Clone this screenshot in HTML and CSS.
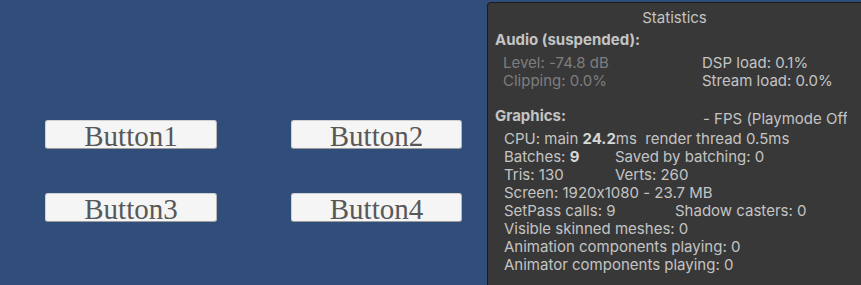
FILE: index.html
```html
<!DOCTYPE html>
<html>
<head>
<meta charset="utf-8">
<link rel="stylesheet" href="styles.css">
</head>
<body>
<div class="scene">
  <div class="canvas">
    <div class="btn">Button1</div>
    <div class="btn">Button2</div>
    <div class="btn">Button3</div>
    <div class="btn">Button4</div>
  </div>
  <div class="stats">
    <div class="title">Statistics</div>
    <div class="clip">
      <div class="head">Audio (suspended):</div>
      <div class="audio">
        <div class="col dim">Level: -74.8 dB<br>Clipping: 0.0%</div>
        <div class="col">DSP load: 0.1%<br>Stream load: 0.0%</div>
      </div>
      <div class="gfx-head">
        <span class="head">Graphics:</span>
        <span class="fps">- FPS (Playmode Off)</span>
      </div>
      <div class="lines">
        <div class="line pre">CPU: main <b>24.2</b>ms  render thread 0.5ms</div>
        <div class="line"><span class="c1">Batches: <b>9</b></span>Saved by batching: 0</div>
        <div class="line"><span class="c1">Tris: 130</span>Verts: 260</div>
        <div class="line">Screen: 1920x1080 - 23.7 MB</div>
        <div class="line"><span class="c2">SetPass calls: 9</span>Shadow casters: 0</div>
        <div class="line">Visible skinned meshes: 0</div>
        <div class="line">Animation components playing: 0</div>
        <div class="line">Animator components playing: 0</div>
      </div>
    </div>
  </div>
</div>
</body>
</html>
```
FILE: styles.css
```css
html, body {
  margin: 0;
  padding: 0;
  width: 861px;
  height: 285px;
  overflow: hidden;
  background: #314d79;
}
.scene {
  display: flex;
  height: 285px;
  overflow: hidden;
}
.canvas {
  width: 487px;
  flex: none;
  display: grid;
  grid-template-columns: 172px 171px;
  grid-auto-rows: 29px;
  column-gap: 74px;
  row-gap: 44px;
  padding: 120px 0 0 45px;
  box-sizing: border-box;
  align-content: start;
}
.btn {
  background: #f5f5f5;
  border: 1px solid #d0d0d0;
  border-bottom-color: #9c9c9c;
  border-right-color: #b8b8b8;
  border-radius: 3px;
  box-sizing: border-box;
  font-family: "Liberation Serif", serif;
  font-size: 29px;
  line-height: 30px;
  color: #585858;
  text-align: center;
}
.stats {
  flex: none;
  width: 374px;
  margin-top: 2px;
  height: 290px;
  background: #383838;
  border: 1px solid #1c1c1c;
  border-right: none;
  border-bottom: none;
  border-radius: 4px 0 0 0;
  box-sizing: border-box;
  font-family: Inter, "Noto Sans", sans-serif;
  font-size: 15px;
  font-feature-settings: "calt" 0;
  color: #c4c4c4;
}
.title {
  text-align: center;
  line-height: 18px;
  padding-top: 6px;
}
.clip {
  width: 352px;
  overflow: hidden;
  white-space: nowrap;
  padding-left: 7px;
}
.head {
  display: block;
  font-weight: 700;
  line-height: 18px;
  padding-top: 4px;
}
.audio {
  display: grid;
  grid-template-columns: 199px auto;
  padding: 5px 0 0 8px;
  line-height: 18px;
}
.dim {
  color: #7e7e7e;
}
.gfx-head {
  display: flex;
  align-items: flex-start;
  margin-top: 17px;
  line-height: 18px;
}
.gfx-head .head {
  padding-top: 0;
  width: 208px;
  flex: none;
}
.fps {
  position: relative;
  top: 3px;
}
.lines {
  padding: 5px 0 0 9px;
  line-height: 18px;
}
.pre {
  white-space: pre;
}
.line b {
  font-weight: 700;
  color: #d6d6d6;
}
.c1 {
  display: inline-block;
  width: 111px;
}
.c2 {
  display: inline-block;
  width: 171px;
}
```
